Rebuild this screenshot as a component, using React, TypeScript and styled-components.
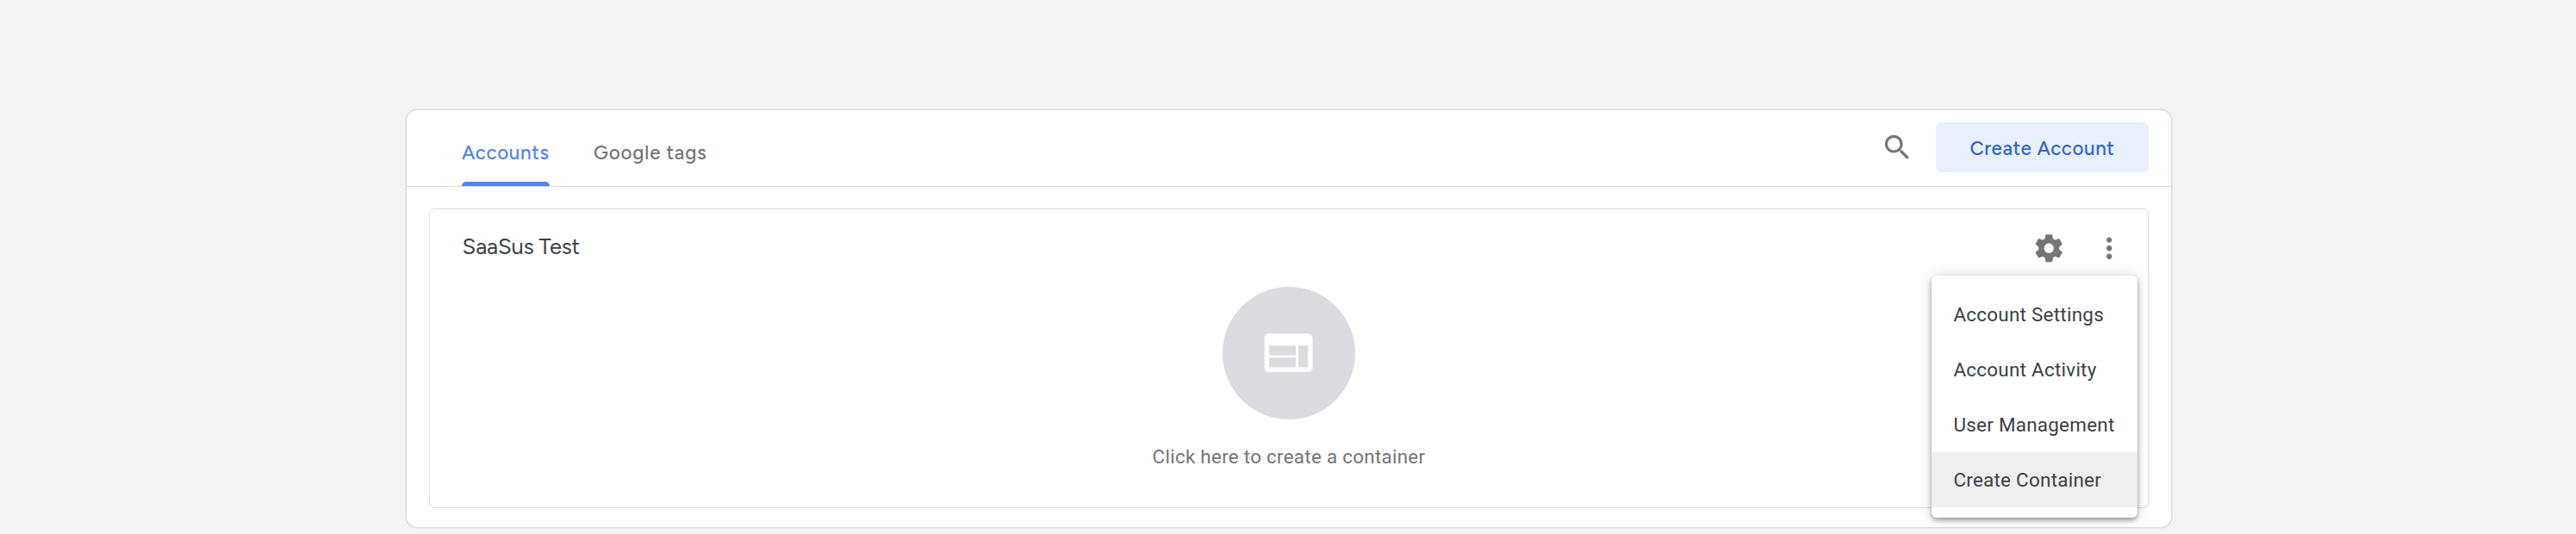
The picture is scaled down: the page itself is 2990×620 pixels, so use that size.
import React from "react";
import styled, { createGlobalStyle } from "styled-components";

const GlobalStyle = createGlobalStyle`
  * { box-sizing: border-box; }
  body { margin: 0; background: #f1f3f4; font-family: Roboto, "Liberation Sans", sans-serif; }
`;

const brandFont = `Figtree, "Google Sans", Lato, "Liberation Sans", sans-serif`;

const Page = styled.main`
  height: 620px;
  padding-top: 127px;
  overflow: hidden;
  background: #f1f3f4;
`;

const Card = styled.section`
  width: 2050px;
  height: 486px;
  margin: 0 auto 0 471px;
  background: #fff;
  border: 1px solid #dadce0;
  border-radius: 13px;
  box-shadow: 0 0 0 0.6px #dadce0;
`;

const Header = styled.header`
  display: flex;
  align-items: stretch;
  height: 89px;
  padding: 0 26px 0 64px;
  border-bottom: 1px solid #dadce0;
`;

const Tabs = styled.nav`
  display: flex;
  gap: 51px;
  flex: 1;
`;

const Tab = styled.a<{ $active?: boolean; $width: number; $spacing: number }>`
  display: flex;
  flex-direction: column;
  justify-content: space-between;
  width: ${(p) => p.$width}px;
  padding-top: 35px;
  font: 550 22.4px/30px ${brandFont};
  letter-spacing: ${(p) => p.$spacing}px;
  white-space: nowrap;
  color: ${(p) => (p.$active ? "#5383ec" : "#757575")};

  &::after {
    content: "";
    height: 5px;
    border-radius: 5px 5px 0 0;
    background: ${(p) => (p.$active ? "#5383ec" : "transparent")};
  }
`;

const Actions = styled.div`
  display: flex;
  align-items: flex-start;
  gap: 26px;
  padding-top: 14px;
`;

const SearchButton = styled.span`
  display: flex;
  padding-top: 9.6px;
`;

const CreateButton = styled.button`
  width: 247px;
  height: 58px;
  padding: 4px 0 0;
  border: 0;
  border-radius: 6.4px;
  background: #e9f0fd;
  color: #3064cd;
  font: 550 22.4px/30px ${brandFont};
  letter-spacing: 0.55px;
  white-space: nowrap;
`;

const AccountPanel = styled.article`
  height: 348px;
  margin: 25px 26px 0;
  border: 1px solid #dadce0;
  border-radius: 6.4px;
`;

const AccountHeader = styled.div`
  display: flex;
  align-items: center;
  justify-content: space-between;
  height: 90px;
  padding: 0 25.2px 2px 37.6px;
`;

const AccountName = styled.h2`
  margin: 0;
  padding-bottom: 3px;
  font: 400 25.6px/32px ${brandFont};
  letter-spacing: -0.15px;
  color: #3c4043;
`;

const AccountTools = styled.div`
  display: flex;
  gap: 31.6px;
  padding-top: 2px;
`;

const MenuAnchor = styled.div`
  position: relative;
  display: flex;
`;

const Menu = styled.ul`
  position: absolute;
  top: 51.2px;
  right: -13.2px;
  width: 239px;
  margin: 0;
  padding: 13px 0 12px;
  list-style: none;
  background: #fff;
  border-radius: 6.4px;
  box-shadow: 0 3px 6.4px -1.6px rgba(0, 0, 0, 0.2), 0 3px 5px rgba(0, 0, 0, 0.2),
    0 1px 16px rgba(0, 0, 0, 0.16);
`;

const MenuItem = styled.li<{ $highlighted?: boolean }>`
  height: 64px;
  padding-left: 25.4px;
  font-size: 22.4px;
  line-height: 64px;
  letter-spacing: 0.28px;
  white-space: nowrap;
  color: #3c4043;
  background: ${(p) => (p.$highlighted ? "#efefef" : "transparent")};
`;

const EmptyState = styled.div`
  display: flex;
  flex-direction: column;
  align-items: center;
`;

const EmptyIcon = styled.div`
  display: flex;
  align-items: center;
  justify-content: center;
  width: 154px;
  height: 154px;
  border-radius: 50%;
  background: #dadce0;
`;

const EmptyText = styled.p`
  margin: 27px 0 0;
  font-size: 22.4px;
  line-height: 32px;
  letter-spacing: 0.28px;
  color: #757575;
`;

const icons = {
  search:
    "M15.5 14h-.79l-.28-.27A6.471 6.471 0 0 0 16 9.5 6.5 6.5 0 1 0 9.5 16c1.61 0 3.09-.59 4.23-1.57l.27.28v.79l5 4.99L20.49 19l-4.99-5zm-6 0C7.01 14 5 11.99 5 9.5S7.01 5 9.5 5 14 7.01 14 9.5 11.99 14 9.5 14z",
  more: "M12 8c1.1 0 2-.9 2-2s-.9-2-2-2-2 .9-2 2 .9 2 2 2zm0 2c-1.1 0-2 .9-2 2s.9 2 2 2 2-.9 2-2-.9-2-2-2zm0 6c-1.1 0-2 .9-2 2s.9 2 2 2 2-.9 2-2-.9-2-2-2z",
  gear: "M19.43 12.98c.04-.32.07-.64.07-.98s-.03-.66-.07-.98l2.11-1.65c.19-.15.24-.42.12-.64l-2-3.46c-.12-.22-.39-.3-.61-.22l-2.49 1c-.52-.4-1.08-.73-1.69-.98l-.38-2.65C14.46 2.18 14.25 2 14 2h-4c-.25 0-.46.18-.49.42l-.38 2.65c-.61.25-1.17.59-1.69.98l-2.49-1c-.23-.09-.49 0-.61.22l-2 3.46c-.13.22-.07.49.12.64l2.11 1.65c-.04.32-.07.65-.07.98s.03.66.07.98l-2.11 1.65c-.19.15-.24.42-.12.64l2 3.46c.12.22.39.3.61.22l2.49-1c.52.4 1.08.73 1.69.98l.38 2.65c.03.24.24.42.49.42h4c.25 0 .46-.18.49-.42l.38-2.65c.61-.25 1.17-.59 1.69-.98l2.49 1c.23.09.49 0 .61-.22l2-3.46c.12-.22.07-.49-.12-.64l-2.11-1.65zM12 15.5c-1.93 0-3.5-1.57-3.5-3.5s1.57-3.5 3.5-3.5 3.5 1.57 3.5 3.5-1.57 3.5-3.5 3.5z",
  web: "M20 4H4c-1.1 0-1.99.9-1.99 2L2 18c0 1.1.9 2 2 2h16c1.1 0 2-.9 2-2V6c0-1.1-.9-2-2-2zm-5 14H4v-4h11v4zm0-5H4V9h11v4zm5 5h-4V9h4v9z",
};

const Glyph = styled.svg`
  display: block;
  flex: none;
`;

interface IconProps {
  name: keyof typeof icons;
  size?: number;
  color?: string;
}

const Icon = ({ name, size = 38.4, color = "#757575" }: IconProps) => (
  <Glyph width={size} height={size} viewBox="0 0 24 24" fill={color}>
    <path d={icons[name]} />
  </Glyph>
);

const menuItems = ["Account Settings", "Account Activity", "User Management", "Create Container"];

export default function App() {
  return (
    <Page>
      <GlobalStyle />
      <Card>
        <Header>
          <Tabs>
            <Tab $active $width={102} $spacing={0.6}>Accounts</Tab>
            <Tab $width={132} $spacing={0.8}>Google tags</Tab>
          </Tabs>
          <Actions>
            <SearchButton>
              <Icon name="search" />
            </SearchButton>
            <CreateButton>Create Account</CreateButton>
          </Actions>
        </Header>
        <AccountPanel>
          <AccountHeader>
            <AccountName>SaaSus Test</AccountName>
            <AccountTools>
              <Icon name="gear" />
              <MenuAnchor>
                <Icon name="more" />
                <Menu>
                  {menuItems.map((label) => (
                    <MenuItem key={label} $highlighted={label === "Create Container"}>
                      {label}
                    </MenuItem>
                  ))}
                </Menu>
              </MenuAnchor>
            </AccountTools>
          </AccountHeader>
          <EmptyState>
            <EmptyIcon>
              <Icon name="web" size={67.2} color="#fff" />
            </EmptyIcon>
            <EmptyText>Click here to create a container</EmptyText>
          </EmptyState>
        </AccountPanel>
      </Card>
    </Page>
  );
}
